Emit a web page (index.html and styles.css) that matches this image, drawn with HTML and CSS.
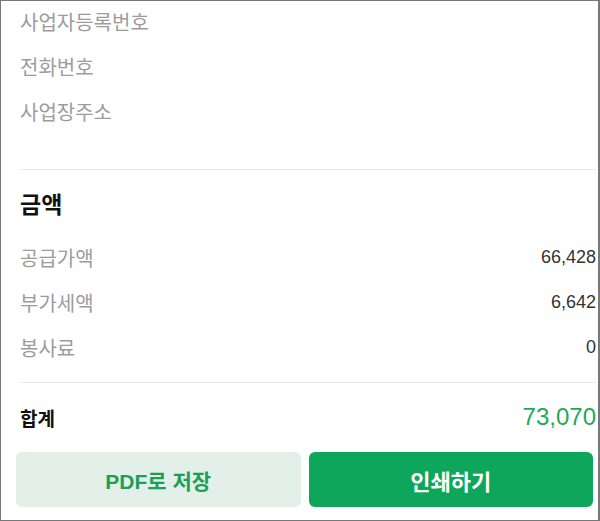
FILE: index.html
```html
<!DOCTYPE html>
<html lang="ko">
<head>
    <meta charset="UTF-8">
    <meta name="viewport" content="width=device-width, initial-scale=1">
    <title>영수증</title>
    <link rel="stylesheet" href="styles.css">
</head>
<body>
    <div class="sheet">
        <div class="content">
            <div class="info">
                <div class="row"><span class="label">사업자등록번호</span></div>
                <div class="row"><span class="label">전화번호</span></div>
                <div class="row"><span class="label">사업장주소</span></div>
            </div>
            <hr class="divider first">
            <div class="amount">
                <h2>금액</h2>
                <div class="rows">
                    <div class="row"><span class="label">공급가액</span><span class="value">66,428</span></div>
                    <div class="row"><span class="label">부가세액</span><span class="value">6,642</span></div>
                    <div class="row"><span class="label">봉사료</span><span class="value">0</span></div>
                </div>
            </div>
            <hr class="divider second">
            <div class="total">
                <span class="total-label">합계</span>
                <span class="total-value">73,070</span>
            </div>
        </div>
        <div class="actions">
            <button class="pdf">PDF로 저장</button>
            <button class="print">인쇄하기</button>
        </div>
    </div>
</body>
</html>
```

FILE: styles.css
```css
body {
    margin: 0;
    font-family: "Liberation Sans", "Noto Sans CJK KR", sans-serif;
    background-color: #fff;
    color: #333;
}
.sheet {
    width: 600px;
    height: 521px;
    box-sizing: border-box;
    border: 1px solid #787878;
    border-right-width: 2px;
    overflow: hidden;
}
.content {
    padding: 0 2px 0 19px;
}
.info {
    display: flex;
    flex-direction: column;
    gap: 5px;
}
.row {
    display: flex;
    justify-content: space-between;
    align-items: center;
    height: 40px;
    font-size: 18px;
}
.label {
    color: #9c9c9c;
    font-size: 20px;
}
.value {
    color: #333;
}
.divider {
    border: none;
    border-top: 1px solid #e8e8e8;
    margin: 0;
}
.divider.first {
    margin-top: 38px;
}
.amount h2 {
    margin: 20px 0 0;
    font-size: 23px;
    line-height: 30px;
    font-weight: bold;
    color: #111;
}
.amount .rows {
    display: flex;
    flex-direction: column;
    gap: 5px;
    margin-top: 17px;
}
.divider.second {
    margin-top: 15px;
}
.total {
    display: flex;
    justify-content: space-between;
    align-items: center;
    height: 40px;
    margin-top: 14px;
}
.total-label {
    font-size: 19px;
    font-weight: bold;
    color: #111;
}
.total-value {
    font-size: 24px;
    color: #1ea95a;
}
.actions {
    display: grid;
    grid-template-columns: 1fr 1fr;
    gap: 8px;
    margin-top: 15px;
    padding: 0 5px 0 15px;
}
button {
    height: 55px;
    border: none;
    border-radius: 6px;
    font-family: "Liberation Sans", "Noto Sans CJK KR", sans-serif;
    font-size: 21px;
    font-weight: bold;
    cursor: pointer;
}
button.pdf {
    background-color: #e2f0e9;
    color: #1c9e56;
}
button.print {
    background-color: #0ea65a;
    color: #fff;
    font-size: 22px;
}
```
